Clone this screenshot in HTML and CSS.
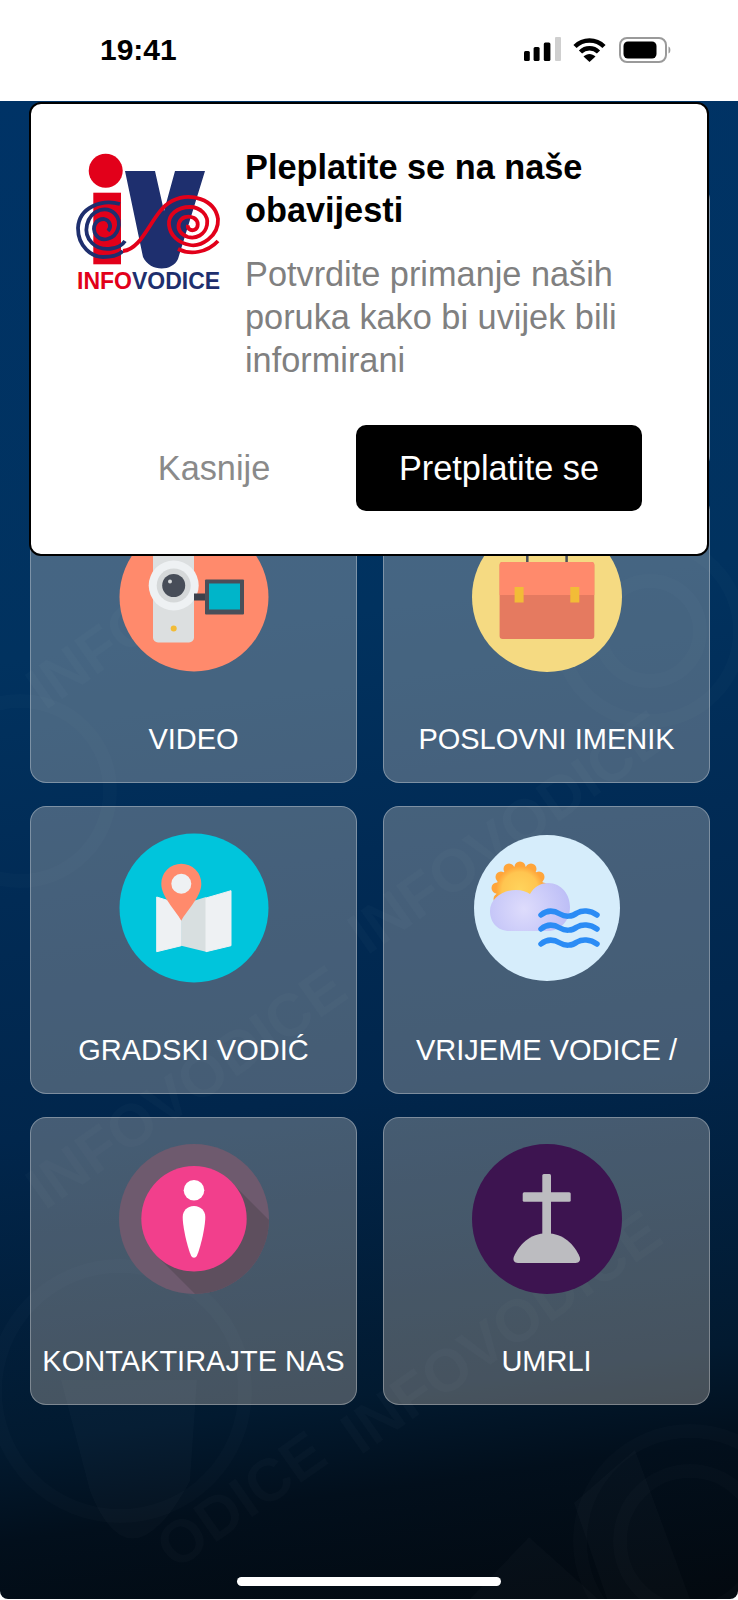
FILE: index.html
```html
<!DOCTYPE html>
<html lang="hr">
<head>
<meta charset="utf-8">
<title>Info Vodice</title>
<link rel="stylesheet" href="styles.css">
</head>
<body>
<header class="status">
  <span class="clock">19:41</span>
  <div class="status-icons">
    <svg class="signal" width="37" height="25" viewBox="0 0 37 25"><rect x="0" y="14" width="5.800" height="10" rx="1.500"/><rect x="9.600" y="10" width="6" height="14" rx="1.500"/><rect x="19.800" y="5.500" width="6.600" height="18.500" rx="1.500"/><rect x="31" y="0" width="6" height="24" rx="1" fill="#cfcfcf"/></svg>
    <svg class="wifi" width="33" height="26" viewBox="0 0 33 26"><path d="M2 9.500C10 1.500 23 1.500 31 9.500" fill="none" stroke="#000" stroke-width="4.500"/><path d="M7.500 15C12.500 10 20.500 10 25.500 15" fill="none" stroke="#000" stroke-width="4.500"/><path d="M16.500 25L10.500 19.500C14 16 19 16 22.500 19.500Z"/></svg>
    <svg class="battery" width="54" height="26" viewBox="0 0 54 26"><rect x="1" y="1" width="46" height="24" rx="7" fill="none" stroke="#9a9a9a" stroke-width="2"/><rect x="4.500" y="4.500" width="33" height="17" rx="4.500"/><path d="M49.500 9.500C52 10 52 16 49.500 16.500Z" fill="#9a9a9a"/></svg>
  </div>
</header>
<main class="screen">
  <svg class="watermark" width="738" height="1498" viewBox="0 0 738 1498" aria-hidden="true">
    <g fill="#fff" fill-opacity=".018">
      <text class="wm-text" transform="translate(175 1470) rotate(-35)">ODICE</text>
      <text class="wm-text" transform="translate(360 1355) rotate(-35)">INFOVODICE</text>
      <text class="wm-text" transform="translate(45 1110) rotate(-35)">INFOVODICE</text>
      <text class="wm-text" transform="translate(367 855) rotate(-35)">INFOVODICE</text>
      <text class="wm-text" transform="translate(45 610) rotate(-35)">INFOVODICE</text>
      <path d="M61 1279H197L190 1380Q130 1490 90 1390Z"/>
      <path d="M635 1349L574 1402L607 1498H690Z"/>
      <path d="M529 1436L470 1498H598Z"/>
    </g>
    <g fill="none" stroke="#fff" stroke-opacity=".016" stroke-width="14">
      <circle cx="120" cy="1290" r="125"/>
      <circle cx="690" cy="1440" r="70"/>
      <circle cx="690" cy="1440" r="110"/>
      <circle cx="20" cy="690" r="90"/>
      <circle cx="650" cy="530" r="50"/>
      <circle cx="650" cy="530" r="90"/>
    </g>
  </svg>

  <div class="grid">
    <div class="card"></div>
    <div class="card"></div>

    <a class="card">
      <svg class="icon" viewBox="0 0 150 150">
        <circle cx="75" cy="75" r="74.500" fill="#ff8a6c"/>
        <rect x="34" y="12" width="41" height="108.500" rx="5" fill="#dcdfe0"/>
        <circle cx="54.700" cy="63.500" r="25" fill="#eef1f3"/>
        <circle cx="54.700" cy="63.500" r="17" fill="#d5d8d9"/>
        <circle cx="54.700" cy="63.500" r="11.500" fill="#474d58"/>
        <circle cx="51" cy="59.500" r="2" fill="#d5d8d9"/>
        <circle cx="54.700" cy="106.500" r="3" fill="#f2bc37"/>
        <rect x="75" y="71.500" width="12" height="7" fill="#3c414b"/>
        <rect x="86" y="57.500" width="39" height="35" rx="1" fill="#4a4f59"/>
        <rect x="90" y="61.500" width="31" height="26" fill="#00b5c9"/>
      </svg>
      <span class="label">VIDEO</span>
    </a>
    <a class="card">
      <svg class="icon" viewBox="0 0 150 150">
        <circle cx="75" cy="75" r="75" fill="#f5da82"/>
        <path d="M55.300 20V40M94.600 20V40" stroke="#4a4f59" stroke-width="2.500"/>
        <rect x="27.600" y="40" width="94.700" height="77" rx="3" fill="#e57a60"/>
        <path d="M27.600 73V43a3 3 0 0 1 3-3H119.300a3 3 0 0 1 3 3V73Z" fill="#ff8a6c"/>
        <rect x="42.600" y="65" width="9" height="15.500" fill="#f2bc37"/>
        <rect x="98.300" y="65" width="9" height="15.500" fill="#f2bc37"/>
      </svg>
      <span class="label">POSLOVNI IMENIK</span>
    </a>

    <a class="card">
      <svg class="icon" viewBox="0 0 150 150">
        <circle cx="75" cy="75" r="74.500" fill="#00c5dc"/>
        <path d="M37.700 64L62.300 71.700V112.700L37.700 118.700Z" fill="#eef1f3" stroke="#eef1f3" stroke-linejoin="round"/>
        <path d="M62.300 71.700L87 64V118.700L62.300 112.700Z" fill="#d8dfe0"/>
        <path d="M87 65L112 57.700V112.700L87 118.700Z" fill="#eef1f3" stroke="#eef1f3" stroke-linejoin="round"/>
        <path d="M62.300 87.700C56 76 42.300 64 42.300 50.700A20 20 0 0 1 82.300 50.700C82.300 64 68.600 76 62.300 87.700Z" fill="#ff8a6c"/>
        <circle cx="62.300" cy="50.700" r="10" fill="#eef1f3"/>
      </svg>
      <span class="label">GRADSKI VODIĆ</span>
    </a>
    <a class="card">
      <svg class="icon" viewBox="0 0 150 150">
        <defs>
          <radialGradient id="sun"><stop offset="0" stop-color="#ffd45c"/><stop offset=".75" stop-color="#ffc550"/><stop offset="1" stop-color="#ffa53a"/></radialGradient>
          <radialGradient id="cloud" gradientUnits="userSpaceOnUse" cx="52" cy="76" r="50"><stop offset="0" stop-color="#dedcfc"/><stop offset="1" stop-color="#babcf6"/></radialGradient>
        </defs>
        <circle cx="75" cy="75" r="73" fill="#d6edfb"/>
        <g fill="#ffa53a">
          <circle cx="48" cy="34" r="5.500"/><circle cx="37" cy="36" r="5.500"/><circle cx="59" cy="36" r="5.500"/><circle cx="29" cy="44" r="5.500"/><circle cx="67" cy="44" r="5.500"/><circle cx="25" cy="55" r="5.500"/><circle cx="71" cy="55" r="5.500"/><circle cx="27" cy="66" r="5.500"/>
        </g>
        <circle cx="48" cy="57" r="24" fill="url(#sun)"/>
        <path d="M38 98C24 98 18 88 18 78C18 66 30 57 44 57C50 57 55 59 58 61C62 54 68 50 76 50C90 50 98 62 98 74C98 88 88 98 76 98Z" fill="url(#cloud)"/>
        <g fill="none" stroke="#2b8cf5" stroke-width="5.500" stroke-linecap="round">
          <path d="M69 82C76 76 83 78 88 81C93 84 100 84 105 80C110 77 118 77 125 82"/>
          <path d="M69 96C76 90 83 92 88 95C93 98 100 98 105 94C110 91 118 91 125 96"/>
          <path d="M69 111C76 105 83 107 88 110C93 113 100 113 105 109C110 106 118 106 125 111"/>
        </g>
      </svg>
      <span class="label">VRIJEME VODICE /</span>
    </a>

    <a class="card">
      <svg class="icon" viewBox="0 0 150 150">
        <clipPath id="round"><circle cx="75" cy="75" r="75"/></clipPath>
        <circle cx="75" cy="75" r="75" fill="#6e5a6e"/>
        <path d="M112 38L190 116L116 190L38 112Z" fill="#5e4f5e" clip-path="url(#round)"/>
        <circle cx="75" cy="74.700" r="52.700" fill="#f23f8c"/>
        <circle cx="75" cy="46.300" r="10.300" fill="#fff"/>
        <path d="M75 62C68 62 63.700 67 63.700 73C63.700 84 69 105 72 111.500C73.500 114.500 76.500 114.500 78 111.500C81 105 86.300 84 86.300 73C86.300 67 82 62 75 62Z" fill="#fff"/>
      </svg>
      <span class="label">KONTAKTIRAJTE NAS</span>
    </a>
    <a class="card">
      <svg class="icon" viewBox="0 0 150 150">
        <circle cx="75" cy="75" r="75" fill="#3d1450"/>
        <rect x="70.300" y="30" width="8.700" height="62" rx="1.500" fill="#bcbcc0"/>
        <rect x="50.700" y="48.300" width="48" height="9.400" rx="1.500" fill="#bcbcc0"/>
        <path d="M74.700 89.300C58 89.300 47 101 42 112.500C40.500 116 42 119 46 119H103.500C107.500 119 109 116 107.500 112.500C102.500 101 91.500 89.300 74.700 89.300Z" fill="#bcbcc0"/>
      </svg>
      <span class="label">UMRLI</span>
    </a>
  </div>

  <section class="popup">
    <div class="popup-body">
      <svg class="logo" width="150" height="150" viewBox="0 0 150 150" role="img" aria-label="Info Vodice">
        <path d="M53 22H83L92 62L103 22H133L106 110C100 123 78 123 71 108Z" fill="#1e2f6e"/>
        <rect x="21.300" y="43.700" width="27.700" height="71.600" fill="#e2001a"/>
        <circle cx="33.700" cy="21.700" r="17" fill="#e2001a"/>
        <g fill="none" stroke-width="3.800">
          <path d="M48 55C30 50 7 58 6 79C6 98 20 108 31 108C40 108 47 106 51 102" stroke="#1e2f6e"/>
          <path d="M51 102C72 100 80 62 100 52C118 43 143 50 146 70C147 88 128 98 118 96C106 94 98 86 97 76C96 66 105 58 118 58C128 58 137 66 135 76C133 86 124 90 116 88C109 86 105 80 107 74C109 68 116 66 122 69C127 72 127 79 122 81C118 82 115 79 116 76" stroke="#e2001a"/>
          <path d="M146 92C135 104 118 106 106 100" stroke="#e2001a"/>
          <path d="M53 92C48 100 30 104 20 94C10 84 14 66 28 61C40 58 50 68 46 80C43 90 30 94 24 86C19 78 24 70 32 70C38 71 40 78 36 82" stroke="#1e2f6e"/>
        </g>
        <text class="logo-text" x="5" y="140.300"><tspan fill="#e2001a">INFO</tspan><tspan fill="#1e2f6e">VODICE</tspan></text>
      </svg>
      <div class="popup-text">
        <h1 class="popup-title">Pleplatite se na naše obavijesti</h1>
        <p class="popup-desc">Potvrdite primanje naših poruka kako bi uvijek bili informirani</p>
      </div>
    </div>
    <div class="popup-actions">
      <button class="btn-later">Kasnije</button>
      <button class="btn-sub">Pretplatite se</button>
    </div>
  </section>

  <div class="home-bar"></div>
</main>
</body>
</html>
```
FILE: styles.css
```css
* { box-sizing: border-box; }
html, body { margin: 0; padding: 0; background: #fff; }
body {
  width: 738px;
  height: 1600px;
  overflow: hidden;
  font-family: "Liberation Sans", Arial, sans-serif;
}
.status {
  height: 101px;
  display: flex;
  align-items: flex-start;
  justify-content: space-between;
  padding: 33px 65px 0 100px;
}
.clock { font-size: 30px; font-weight: 700; line-height: 34px; color: #000; }
.status-icons { display: flex; align-items: flex-start; gap: 13px; padding-top: 4px; }
.wifi { margin-left: -1px; }
.screen {
  position: relative;
  height: 1498px;
  overflow: hidden;
  border-radius: 0 0 8px 8px;
  background: linear-gradient(172deg, #003366 0%, #01325f 35%, #012b55 50%, #01264c 65%, #021a30 84%, #020f1c 90%, #03090f 100%);
}
.watermark { position: absolute; left: 0; top: 0; }
.wm-text { font-size: 60px; font-weight: 700; }
.grid {
  position: relative;
  display: grid;
  grid-template-columns: 327px 327px;
  grid-auto-rows: 288px;
  column-gap: 26px;
  row-gap: 23px;
  padding: 83px 0 0 30px;
}
.card {
  display: flex;
  flex-direction: column;
  align-items: center;
  padding-top: 26px;
  border: 1.500px solid rgba(255, 255, 255, .3);
  border-radius: 16px;
  background: rgba(255, 240, 225, .27);
}
.icon { width: 150px; height: 150px; flex: none; }
.label {
  margin-top: 50px;
  font-size: 29px;
  line-height: 34px;
  color: #fff;
  white-space: nowrap;
}
.popup {
  position: absolute;
  left: 29px;
  top: 1px;
  width: 680px;
  height: 454px;
  padding: 42px 65px 0 41px;
  background: #fff;
  border: 2px solid #000;
  border-radius: 12px;
}
.popup-body { display: flex; gap: 23px; }
.logo { flex: none; margin-top: 3px; }
.popup-title {
  margin: 0 0 21px;
  font-size: 34.300px;
  line-height: 43px;
  font-weight: 700;
  color: #000;
}
.popup-desc {
  margin: 0;
  font-size: 34.300px;
  line-height: 43px;
  color: #808080;
}
.popup-actions {
  display: flex;
  justify-content: space-between;
  align-items: center;
  margin-top: 43px;
}
.btn-later, .btn-sub {
  font: inherit;
  font-size: 34.300px;
  border: 0;
  cursor: pointer;
}
.btn-later { width: 220px; margin-left: 32px; padding-bottom: 1px; background: none; color: #8a8a8a; }
.btn-sub { width: 286px; height: 86px; border-radius: 10px; background: #000; color: #fff; }
.logo-text { font-size: 23px; font-weight: 700; }
.home-bar {
  position: absolute;
  left: 237px;
  top: 1476px;
  width: 264px;
  height: 9px;
  border-radius: 5px;
  background: #fff;
}
```
